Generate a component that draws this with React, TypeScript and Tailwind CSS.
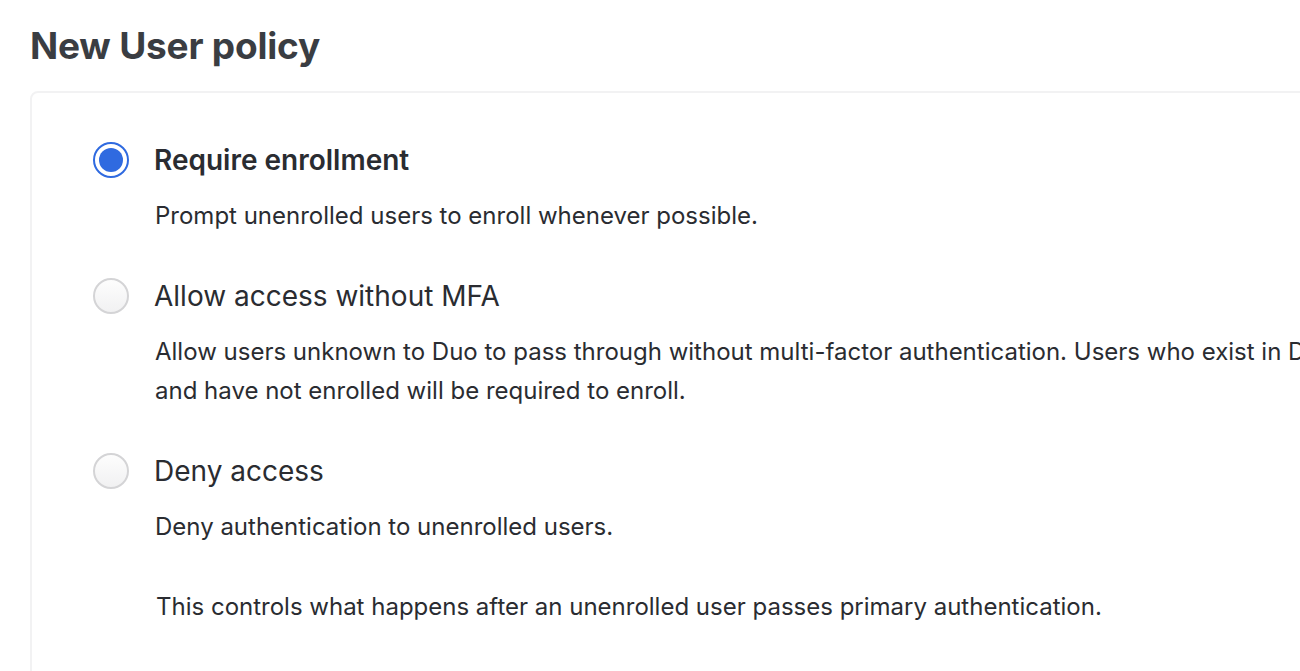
import { useState } from "react";

interface Option {
  id: string;
  label: string;
  description: string[];
}

const options: Option[] = [
  {
    id: "require",
    label: "Require enrollment",
    description: ["Prompt unenrolled users to enroll whenever possible."],
  },
  {
    id: "allow",
    label: "Allow access without MFA",
    description: [
      "Allow users unknown to Duo to pass through without multi-factor authentication. Users who exist in Duo",
      "and have not enrolled will be required to enroll.",
    ],
  },
  {
    id: "deny",
    label: "Deny access",
    description: ["Deny authentication to unenrolled users."],
  },
];

function Radio({ checked }: { checked: boolean }) {
  if (checked) {
    return (
      <span className="flex h-[36px] w-[36px] shrink-0 items-center justify-center rounded-full border-2 border-[#2f6ae0] bg-white">
        <span className="h-[24px] w-[24px] rounded-full bg-[#2f6ae0]" />
      </span>
    );
  }
  return (
    <span className="h-[36px] w-[36px] shrink-0 rounded-full border-2 border-[#d4d4d6] bg-gradient-to-b from-[#fdfdfd] to-[#f1f1f2]" />
  );
}

export default function App() {
  const [selected, setSelected] = useState("require");

  return (
    <div className="h-[671px] w-[1300px] overflow-hidden bg-white font-['Inter',sans-serif] text-[#2a2c31]">
      <h1 className="pl-[30px] pt-[22px] text-[37px] font-bold leading-[48px] tracking-[-0.2px] text-[#3a3d42]">
        New User policy
      </h1>
      <div className="ml-[30px] mt-[21px] w-[1400px] rounded-[8px] border-2 border-[#f2f2f3] pb-[80px] pl-[61px] pt-[49px]">
        <div className="flex flex-col gap-[43px]">
          {options.map((opt) => (
            <div key={opt.id}>
              <label className="flex cursor-pointer items-center gap-[25px]" onClick={() => setSelected(opt.id)}>
                <Radio checked={selected === opt.id} />
                <span
                  className={
                    selected === opt.id
                      ? "text-[28px] font-semibold leading-[36px]"
                      : "text-[28px] font-normal leading-[36px]"
                  }
                >
                  {opt.label}
                </span>
              </label>
              <div className="mt-[18px] pl-[62px] text-[24px] leading-[39px]">
                {opt.description.map((line) => (
                  <div key={line} className="whitespace-nowrap">
                    {line}
                  </div>
                ))}
              </div>
            </div>
          ))}
        </div>
        <p className="mt-[41px] pl-[63px] text-[24px] leading-[39px]">
          This controls what happens after an unenrolled user passes primary authentication.
        </p>
      </div>
    </div>
  );
}
